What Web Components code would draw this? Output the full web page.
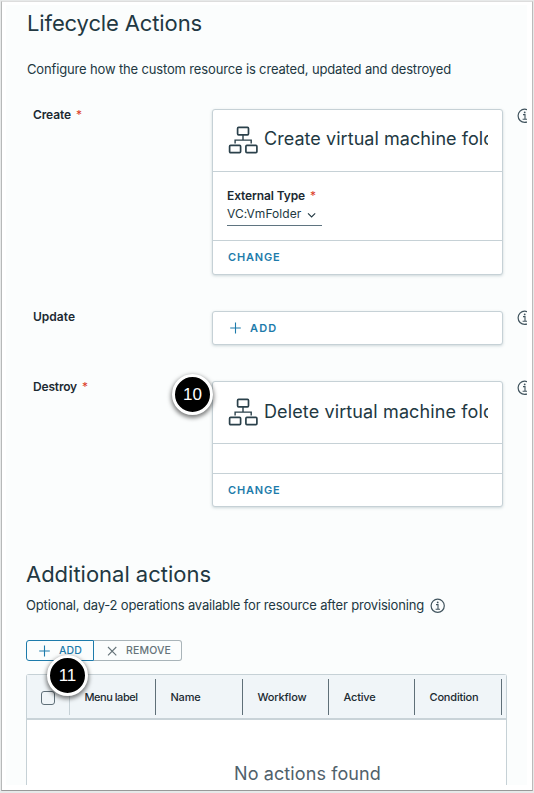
<!DOCTYPE html>
<html lang="en">
<head>
<meta charset="utf-8">
<title>Lifecycle Actions</title>
<style>
html,body{margin:0;height:100%;overflow:hidden;background:#fff}
body{font-family:Inter,"Liberation Sans",sans-serif;color:#223842}
</style>
</head>
<body>
<resource-page></resource-page>
<script>
const element = (name, html, ready) => customElements.define(name, class extends HTMLElement {
  connectedCallback() {
    if (this.shadowRoot) return;
    const root = this.attachShadow({ mode: 'open' });
    root.innerHTML = html;
    if (ready) ready(this, root);
  }
});

/* One line of text whose tracking is set so that it fills the width in "w". */
element('tracked-text', `<style>:host{display:block;white-space:nowrap;flex:none}span{display:inline-block}</style><span><slot></slot></span>`,
  (host, root) => {
    const span = root.querySelector('span');
    const target = Number(host.getAttribute('w'));
    const natural = span.getBoundingClientRect().width;
    const count = host.textContent.length;
    span.style.letterSpacing = ((target - natural) / count) + 'px';
    host.style.width = target + 'px';
  });

element('info-icon', `<style>:host{display:block;width:16px;height:16px;flex:none}svg{display:block}</style>
<svg width="16" height="16" viewBox="0 0 16 16" fill="none" stroke="#41545e" stroke-width="1.2"><circle cx="7.7" cy="7.8" r="6.6"/><path d="M6 6.6H8V11.2M5.6 11.3H10" stroke-width="1.1"/><circle cx="7.7" cy="4.4" r=".9" fill="#41545e" stroke="none"/></svg>`);

element('workflow-icon', `<style>:host{display:block;width:30px;height:28px;flex:none}svg{display:block}</style>
<svg width="30" height="28" viewBox="0 0 30 28" fill="none" stroke="#2b414b" stroke-width="1.7"><rect x="9.6" y="1.4" width="10.9" height="7.4" rx="1"/><rect x="1.6" y="19.4" width="11" height="7.2" rx="1"/><rect x="17.9" y="19.4" width="11" height="7.2" rx="1"/><path d="M15 9V14.1M7.1 17.5V14.1H23.2V17.5" stroke-width="1.4"/></svg>`);

element('line-icon', `<style>:host{display:block;width:12px;height:12px;flex:none}svg{display:block}</style>
<svg width="12" height="12" viewBox="0 0 12 12" fill="none" stroke="currentColor" stroke-width="1.1"><path/></svg>`,
  (host, root) => {
    const shapes = { plus: 'M5.5 .5V11.5M.2 6H10.8', cross: 'M2 2L10.3 10.3M10.3 2L2 10.3', down: 'M2 4.3L5.6 7.9L9.2 4.3' };
    root.querySelector('path').setAttribute('d', shapes[host.getAttribute('shape')]);
  });

element('step-badge', `<style>
:host{display:flex;box-sizing:border-box;width:41px;height:41px;border:3px solid #fff;border-radius:50%;background:#000;color:#fff;align-items:center;justify-content:center;font:17px/20px "Liberation Sans",sans-serif;box-shadow:0 2px 4px 1px rgba(0,0,0,.5)}
</style><slot></slot>`);

element('action-card', `<style>
:host{display:flex;flex-direction:column;box-sizing:border-box;width:291px;background:#fff;border:1px solid #c6d1d6;border-radius:3px;box-shadow:0 1px 3px rgba(100,125,135,.3)}
header{display:flex;box-sizing:border-box;height:62px;padding:0 14px 2px 15px;align-items:center;border-bottom:1px solid #c6d1d6}
.name{margin-left:6px;flex:1;min-width:0;overflow:hidden;font-size:18px;line-height:var(--title-line,26px);height:28px}
.body{flex:1;padding:14px 14px 0}
footer{display:flex;box-sizing:border-box;height:var(--footer,34px);border-top:1px solid #c6d1d6;padding:0 15px 1px;align-items:center;font-size:11px;font-weight:600;color:#1d7bab}
</style>
<header><workflow-icon></workflow-icon><div class="name"><slot name="title"></slot></div></header>
<div class="body"><slot></slot></div>
<footer><tracked-text w="52.5">CHANGE</tracked-text></footer>`);

element('add-card', `<style>
:host{display:flex;box-sizing:border-box;width:291px;height:34px;background:#fff;border:1px solid #c6d1d6;border-radius:3px;box-shadow:0 1px 3px rgba(100,125,135,.3);padding:0 17px;gap:8px;align-items:center;font-size:11px;font-weight:600;color:#1d7bab}
</style><line-icon shape="plus"></line-icon><tracked-text w="27.5">ADD</tracked-text>`);

element('form-row', `<style>
:host{display:grid;grid-template-columns:179px 291px 16px;column-gap:0;align-items:start;position:relative}
.label{display:flex;gap:5px;font-size:12px;font-weight:600;line-height:12px;color:#1b2a32}
info-icon{margin-left:14px;margin-top:-1px}
</style><div class="label"><slot name="label"></slot></div><slot></slot><info-icon></info-icon><slot name="badge"></slot>`);

element('select-field', `<style>
:host{display:block}
.l{display:flex;gap:5px;font-size:12px;font-weight:600;line-height:20px;color:#1b2a32}
.l i{font-style:normal;font-weight:400;color:#db3b26}
.v{display:flex;box-sizing:border-box;width:95px;height:20px;gap:4px;align-items:center;padding-bottom:5px;border-bottom:1px solid #5f7480;font-size:12px}
line-icon{margin-top:3px}
</style><div class="l"><tracked-text w="78">External Type</tracked-text><i>*</i></div>
<div class="v"><tracked-text w="75">VC:VmFolder</tracked-text><line-icon shape="down"></line-icon></div>`);

element('button-bar', `<style>
:host{display:flex;position:relative;font-size:10.5px;font-weight:500;height:22px}
div{display:flex;box-sizing:border-box;align-items:center;border:1px solid #a9b4b9}
div tracked-text{margin-top:-1px}
.a{width:68px;gap:8px;padding-left:12px;border-color:#1d7bab;border-radius:3px 0 0 3px;color:#1d7bab}
.r{width:88px;gap:8px;padding-left:12px;border-left:0;border-radius:0 3px 3px 0;color:#657379}
step-badge{position:absolute;left:21px;top:15px;z-index:2}
</style><div class="a"><line-icon shape="plus"></line-icon><tracked-text w="23">ADD</tracked-text></div>
<div class="r"><line-icon shape="cross"></line-icon><tracked-text w="45">REMOVE</tracked-text></div><step-badge>11</step-badge>`);

element('actions-grid', `<style>
:host{display:flex;flex-direction:column;box-sizing:border-box;width:481px;height:111px;background:#fff;border:1px solid #c6d1d6;border-bottom:0;border-radius:3px 3px 0 0}
.head{flex:none;display:grid;grid-template-columns:43px 86px 87px 86px 86px 87px 1fr;height:43px;background:#f0f5f8;border-bottom:2px solid #c9d3d8;font-size:11px;font-weight:550;color:#1b2a32;align-items:center}
.head>div{display:flex;align-items:center;box-sizing:border-box;height:36px;padding-left:14.5px;border-right:1px solid #5f6f78}
.head>.c{border-color:#c6d1d6;padding-left:14px}
.box{box-sizing:border-box;width:14px;height:14px;border:1px solid #5f6f78;border-radius:3px;margin-top:2px}
.empty{flex:none;display:flex;justify-content:center;padding:42px 0 0 82px;font-size:18px;line-height:24px;color:#50616b}
</style><div class="head"><div class="c"><span class="box"></span></div><div><tracked-text w="53">Menu label</tracked-text></div><div><tracked-text w="30">Name</tracked-text></div><div><tracked-text w="49">Workflow</tracked-text></div><div><tracked-text w="32">Active</tracked-text></div><div><tracked-text w="49">Condition</tracked-text></div></div>
<div class="empty"><tracked-text w="147">No actions found</tracked-text></div>`);

element('resource-page', `<style>
:host{display:block;box-sizing:border-box;width:534px;height:793px;padding:1px 1px 2px 1px;background:#e7e9e9}
.frame{box-sizing:border-box;height:790px;background:#fff;border:1px solid #b7b9b9;border-top-color:#ddd;border-right-color:#bbb;border-bottom-color:#999;padding:3px 5px 4px 4px}
main{box-sizing:border-box;height:780px;overflow:hidden;background:#fbfdfd;padding:0 0 0 20px;display:flex;flex-direction:column}
h1,h2,p{margin:0;font-weight:400}
h1{font-size:22px;line-height:28px;padding:4px 0 0 1px}
p{font-size:13px;line-height:20px}
.intro{padding:22px 0 0 1px}
.rows{display:flex;flex-direction:column;gap:36px;padding:30px 0 0 7px}
.big{height:166px}
.small{height:126px;--footer:33px;--title-line:28px}
.t{letter-spacing:.05px;white-space:nowrap}
.need{color:#db3b26;font-weight:400}
step-badge{position:absolute;left:139px;top:-7px}
h2{font-size:22px;line-height:28px;margin-top:53px}
.sub{display:flex;gap:6px;align-items:center;margin-top:7px}
.sub info-icon{margin-top:2px}
button-bar{margin-top:25px;width:156px}
actions-grid{margin-top:13px;flex:none}
</style>
<div class="frame"><main>
<h1><tracked-text w="175">Lifecycle Actions</tracked-text></h1>
<p class="intro"><tracked-text w="424">Configure how the custom resource is created, updated and destroyed</tracked-text></p>
<div class="rows">
<form-row><tracked-text slot="label" w="38">Create</tracked-text><span slot="label" class="need">*</span><action-card class="big"><span slot="title" class="t">Create virtual machine folder</span><select-field></select-field></action-card></form-row>
<form-row><tracked-text slot="label" w="42">Update</tracked-text><add-card></add-card></form-row>
<form-row><tracked-text slot="label" w="44">Destroy</tracked-text><span slot="label" class="need">*</span><action-card class="small"><span slot="title" class="t" style="letter-spacing:.12px">Delete virtual machine folder</span></action-card><step-badge slot="badge">10</step-badge></form-row>
</div>
<h2><tracked-text w="185">Additional actions</tracked-text></h2>
<p class="sub"><tracked-text w="398">Optional, day-2 operations available for resource after provisioning</tracked-text><info-icon></info-icon></p>
<button-bar></button-bar>
<actions-grid></actions-grid>
</main></div>`);
</script>
</body>
</html>
